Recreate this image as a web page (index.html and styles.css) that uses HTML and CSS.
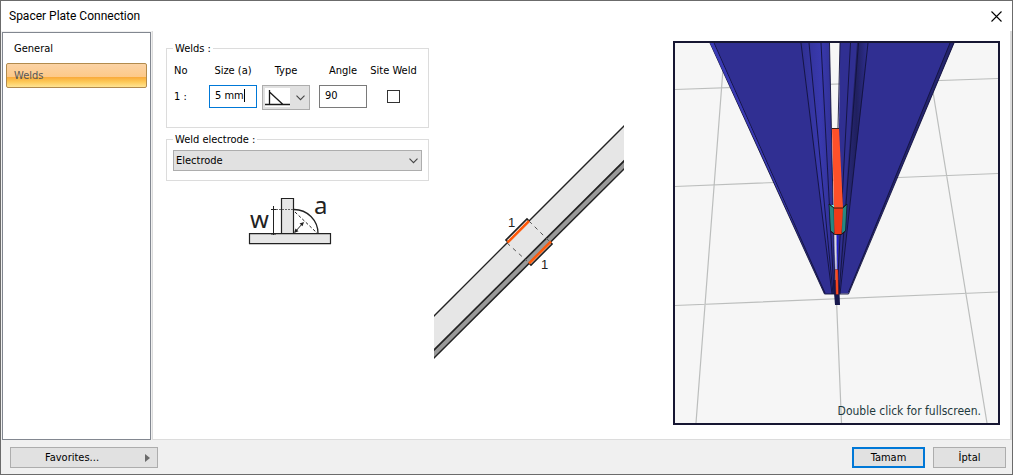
FILE: index.html
```html
<!DOCTYPE html>
<html lang="en">
<head>
<meta charset="utf-8">
<title>Spacer Plate Connection</title>
<link rel="stylesheet" href="styles.css">
</head>
<body>
<div class="dialog">
  <header class="titlebar">
    <h1 class="title">Spacer Plate Connection</h1>
    <button class="close" type="button" aria-label="Close">
      <svg width="11" height="11" viewBox="0 0 11 11"><path d="M.5 .5l10 10M10.5 .5l-10 10" stroke="#000" stroke-width="1.1" fill="none"/></svg>
    </button>
  </header>
  <div class="body">
    <nav class="sidebar">
      <button class="tab" type="button">General</button>
      <button class="tab tab-active" type="button">Welds</button>
    </nav>
    <main class="page">
      <section class="settings">
        <fieldset class="group">
          <legend>Welds :</legend>
          <div class="weld-grid">
            <span>No</span>
            <label class="head" for="size">Size (a)</label>
            <label class="head" for="type">Type</label>
            <label class="head" for="angle">Angle</label>
            <label class="head-wide" for="site">Site Weld</label>
            <span class="row-no">1 :</span>
            <span class="size-box"><input class="field field-focus" id="size" type="text" value="5 mm"></span>
            <span class="type-box">
              <select class="combo type-combo" id="type"><option label=" " value="fillet"></option></select>
              <svg class="type-icon" width="25" height="19" viewBox="0 0 25 19"><path fill="#fff" d="M0 0h25v19H0z"/><path d="M0 16.500h25M4.500 2v15M4.500 4L18 16.500" fill="none" stroke="#1a1a1a" stroke-width="1.300"/></svg>
              <svg class="chevron" width="9" height="6" viewBox="0 0 9 6"><path d="M.5 .7l4 4 4-4" fill="none" stroke="#444" stroke-width="1.100"/></svg>
            </span>
            <input class="field" id="angle" type="text" value="90">
            <input class="check" id="site" type="checkbox">
          </div>
        </fieldset>
        <fieldset class="group group-electrode">
          <legend>Weld electrode :</legend>
          <div class="electrode-box">
            <select class="combo electrode" aria-label="Weld electrode"><option>Electrode</option></select>
            <svg class="chevron" width="9" height="6" viewBox="0 0 9 6"><path d="M.5 .7l4 4 4-4" fill="none" stroke="#444" stroke-width="1.100"/></svg>
          </div>
        </fieldset>
        <svg class="legend-drawing" width="92" height="61" viewBox="248 184 92 61">
          <g fill="#e6e6e6" stroke="#222" stroke-width="1.200"><path d="M281.500 198.500h12v35h-12zM249.500 233.700h81v10h-81z"/></g>
          <g fill="none" stroke="#222"><path d="M294 209.500a24 24 0 0 1 24 24" stroke-width="1.300"/><path d="M295 212l22 21" stroke-dasharray="3 2"/><path d="M273.500 206v29M271 209.500h5M271 234h5"/><path d="M276 209.500h17" stroke="#666" stroke-dasharray="2 1"/><path d="M295 232l8-9"/></g>
          <path d="M294 233l1.500-4.500 3 2.800zM304 222l-4.500 1.500 3 2.800z" fill="#222"/>
          <text class="dim" x="250" y="228">w</text><text class="dim" x="314" y="214">a</text>
        </svg>
      </section>
      <svg class="diagram" width="190" height="236" viewBox="434 125 190 236">
        <path d="M434 316L624 126V160L434 350z" fill="#e6e6e6"/>
        <path d="M434 350L624 160V169L434 358z" fill="#999"/>
        <g fill="none" stroke="#222"><path d="M433 317L625 125" stroke-width="1.300"/><path d="M433 351L625 160" stroke-width="1.700"/><path d="M433 359L625 168" stroke-width="1.500"/></g>
        <path d="M529 221l21 21M507 243l20 18" fill="none" stroke="#555" stroke-dasharray="4 4"/>
        <path d="M508 242l-2-2 21-21 2 2M550 242l2 2-21 21-2-2" fill="#fff" stroke="#222" stroke-width="1.700"/>
        <path d="M507.500 242.500l21.500-21.500M529 263.500l22-22" fill="none" stroke="#ff5a0a" stroke-width="2.600"/>
        <text class="mark" x="508" y="227">1</text><text class="mark" x="541" y="269">1</text>
      </svg>
      <div class="preview">
        <svg class="scene" viewBox="675 43 323 380" preserveAspectRatio="none">
          <defs>
            <linearGradient id="shade"><stop offset="0" stop-color="#303092"/><stop offset=".6" stop-color="#20205f"/><stop offset="1" stop-color="#303098"/></linearGradient>
            <linearGradient id="light"><stop offset="0" stop-color="#303092"/><stop offset=".6" stop-color="#3939ae"/><stop offset="1" stop-color="#303092"/></linearGradient>
          </defs>
          <path d="M675 89.500L998 78.500M675 186.500L998 173.500M675 305.500L998 292M725 43L696 423M925 43L987 423M836.500 300L841.500 423" fill="none" stroke="#bcbebd" stroke-width="1.200"/>
          <path d="M710 43H829.500L835 294H824.500z" fill="#302f92"/>
          <path d="M840 43H954L848.500 293.500H837z" fill="#302f92"/>
          <path d="M801 43h28l5 251h-2z" fill="url(#light)"/>
          <path d="M857 43h12L839 294h-1z" fill="url(#shade)"/>
          <path d="M954 43h-4L848 293.500z" fill="#24246c"/>
          <g fill="none" stroke="#12123c" stroke-width=".9">
            <path d="M714 43L825 293M710 43L824.500 294H848.500L954 43M950 43L848.500 292M801 43L832 294M809 43L833 294M821 43L834 294M829.500 43L835 294M840 43L838 128M850.500 43L837 294M858.500 43L839 294M868 43L840 294"/>
          </g>
          <path d="M710 43h3.500L800 238z" fill="#3a3ab4"/>
          <path d="M833 280h6l1 25h-5z" fill="#17174d"/>
          <path d="M834.500 232h4l-1 38h-2.500z" fill="#1d1dce"/>
          <path d="M834.500 233h2l.3 37h-1.500z" fill="#ddd"/>
          <path d="M835.200 269.500h2.800l.5 25h-2.600z" fill="#ff4820" stroke="#351020" stroke-width=".4"/>
          <path d="M829 204l5 3.500.5 26.500-4-3zM847 204l-5 3.500-.5 26.500 4-3z" fill="#278782" stroke="#0b2024" stroke-width=".8"/>
          <path d="M831 205l3 0v3z" fill="#60f0e4"/>
          <path d="M832 128.500h7l4 79.500h-9z" fill="#ff5029"/>
          <path d="M834 208h9l-1.500 26h-7z" fill="#ef3918"/>
          <path d="M832 128.500h7M829 204l5 4h9l4-4M830.500 231l4 3.500h7l4-3.500" fill="none" stroke="#211" stroke-width=".9"/>
        </svg>
        <p class="hint">Double click for fullscreen.</p>
      </div>
    </main>
  </div>
  <footer class="footer">
    <button class="btn btn-favorites" type="button"><span>Favorites...</span><svg width="5" height="8" viewBox="0 0 5 8"><path d="M0 0l5 4-5 4z" fill="#6a6a6a"/></svg></button>
    <button class="btn btn-default" type="button">Tamam</button>
    <button class="btn" type="button">İptal</button>
  </footer>
</div>
</body>
</html>
```
FILE: styles.css
```css
* { box-sizing: border-box; }
body {
  margin: 0;
  font: 11px/14px "DejaVu Sans Condensed", "DejaVu Sans", sans-serif;
  color: #000;
}
button, input, select { font: inherit; color: inherit; margin: 0; border-radius: 0; }
.dialog {
  display: flex;
  flex-direction: column;
  min-height: 100vh;
  background: #f0f0f0;
  border: 1px solid #6b6b6b;
}
.titlebar {
  display: flex;
  align-items: center;
  justify-content: space-between;
  height: 30px;
  padding: 0 10px 0 8px;
  background: #fff;
}
.title { margin: 0; font: 12px/16px Roboto, "Open Sans", sans-serif; }
.close { display: flex; padding: 0; border: 0; background: none; }
.body { flex: 1; display: flex; }
.sidebar {
  width: 149px;
  margin: 1px 1px 0 1px;
  padding: 4px 3px;
  background: #fff;
  border: 1px solid #828790;
}
.tab {
  display: block;
  width: 100%;
  height: 25px;
  margin-bottom: 1px;
  padding: 0 7px 2px;
  border: 1px solid transparent;
  background: none;
  text-align: left;
}
.tab-active {
  padding-bottom: 0;
  color: #555;
  border-color: #b28b4d;
  border-radius: 2px;
  background: linear-gradient(#fbd3a5 0%, #fdc989 55%, #f9ab3c 58%, #fdca59 78%, #ffe493 100%);
}
.page {
  flex: 1;
  display: flex;
  align-items: flex-start;
  padding: 10px 10px 14px 13px;
  background: #fff;
  border: solid #dcdcdc;
  border-width: 0 2px 1px 1px;
}
.settings { width: 263px; display: flex; flex-direction: column; }
.group {
  min-width: 0;
  margin: 0;
  padding: 0 6px 17px;
  border: 1px solid #dcdcdc;
}
.group legend { padding: 2px 2px 0; line-height: 12px; margin-top: -1px; }
.weld-grid {
  display: grid;
  grid-template-columns: 35px 53px 57px 48px 1fr;
  row-gap: 7px;
  padding: 9px 2px 0 1px;
}
.head { width: 48px; text-align: center; }
.head-wide { text-align: center; white-space: nowrap; }
.row-no { padding-top: 5px; }
.size-box, .type-box, .electrode-box { position: relative; }
.size-box::after {
  content: "";
  position: absolute;
  left: 35px;
  top: 4px;
  width: 1px;
  height: 13px;
  background: #000;
}
.field {
  display: block;
  width: 48px;
  height: 23px;
  padding: 0 4px 2px 5px;
  border: 1px solid #7a7a7a;
  background: #fff;
  outline: 0;
}
.field-focus { border-color: #0078d7; }
.combo {
  appearance: none;
  display: block;
  height: 25px;
  padding: 0 3px;
  border: 1px solid #adadad;
  background: #e1e1e1;
}
.type-combo { width: 48px; }
.type-icon { position: absolute; left: 3px; top: 3px; }
.chevron { position: absolute; right: 4px; top: 8px; }
.type-box .chevron { right: 14px; top: 10px; }
.check {
  appearance: none;
  width: 13px;
  height: 13px;
  margin-top: 5px;
  justify-self: center;
  border: 1px solid #333;
  background: #fff;
}
.group-electrode { margin-top: 4px; padding-bottom: 9px; }
.electrode-box { padding-top: 4px; }
.electrode { width: 100%; height: 21px; padding: 0 2px; }
.electrode-box .chevron { top: 12px; }
.legend-drawing { margin: 3px 0 0 82px; }
.dim { font: 24px "Noto Sans", sans-serif; fill: #222; }
.mark { font: 13px "Liberation Sans", sans-serif; fill: #222; }
.diagram { flex: none; margin: 84px 0 0 5px; }
.preview {
  position: relative;
  flex: none;
  width: 327px;
  margin-left: auto;
  border: 2px solid #161632;
  background: #f6f6f6;
}
.scene { display: block; width: 100%; aspect-ratio: 323 / 380; }
.hint {
  position: absolute;
  right: 17px;
  bottom: 4px;
  margin: 0;
  font-size: 12px;
  line-height: 16px;
  color: #1f3a3d;
}
.footer { display: flex; gap: 8px; padding: 7px 6px 6px 9px; }
.btn {
  width: 73px;
  height: 21px;
  padding: 0;
  border: 1px solid #adadad;
  background: #e1e1e1;
}
.btn-default { border: 2px solid #0078d7; }
.btn-favorites {
  display: flex;
  align-items: center;
  width: 148px;
  margin-right: auto;
  padding: 0 7px 0 34px;
}
.btn-favorites svg { margin-left: auto; }
```
